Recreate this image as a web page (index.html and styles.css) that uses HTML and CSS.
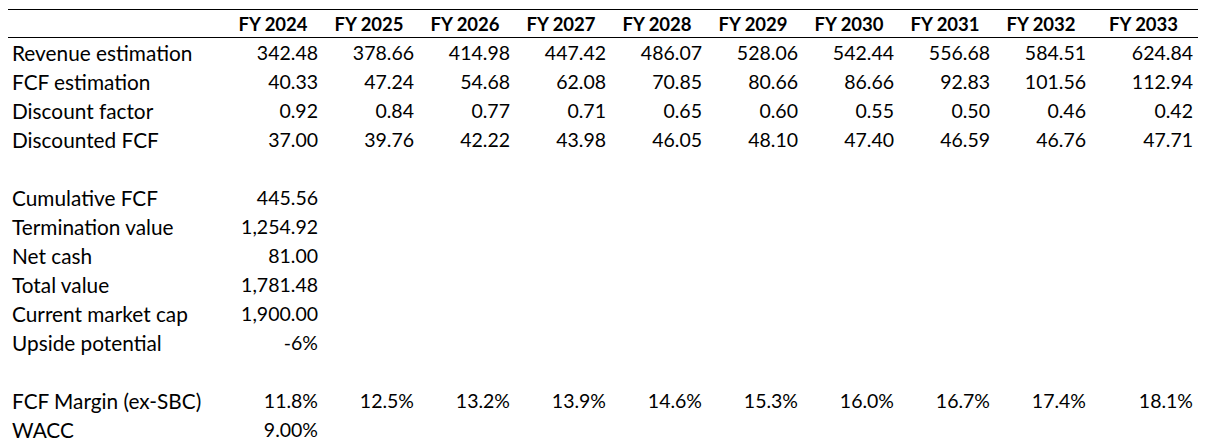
FILE: index.html
```html
<!DOCTYPE html>
<html>
<head>
<meta charset="utf-8">
<link rel="stylesheet" href="styles.css">
</head>
<body>
<table class="dcf">
  <colgroup>
    <col class="c-label">
    <col class="c-yr"><col class="c-yr"><col class="c-yr"><col class="c-yr"><col class="c-yr">
    <col class="c-yr"><col class="c-yr"><col class="c-yr"><col class="c-yr">
    <col class="c-last">
  </colgroup>
  <thead>
    <tr class="head">
      <th></th>
      <th>FY 2024</th><th>FY 2025</th><th>FY 2026</th><th>FY 2027</th><th>FY 2028</th>
      <th>FY 2029</th><th>FY 2030</th><th>FY 2031</th><th>FY 2032</th><th>FY 2033</th>
    </tr>
  </thead>
  <tbody>
    <tr><td class="lbl">Revenue estimation</td><td>342.48</td><td>378.66</td><td>414.98</td><td>447.42</td><td>486.07</td><td>528.06</td><td>542.44</td><td>556.68</td><td>584.51</td><td>624.84</td></tr>
    <tr><td class="lbl">FCF estimation</td><td>40.33</td><td>47.24</td><td>54.68</td><td>62.08</td><td>70.85</td><td>80.66</td><td>86.66</td><td>92.83</td><td>101.56</td><td>112.94</td></tr>
    <tr><td class="lbl">Discount factor</td><td>0.92</td><td>0.84</td><td>0.77</td><td>0.71</td><td>0.65</td><td>0.60</td><td>0.55</td><td>0.50</td><td>0.46</td><td>0.42</td></tr>
    <tr><td class="lbl">Discounted FCF</td><td>37.00</td><td>39.76</td><td>42.22</td><td>43.98</td><td>46.05</td><td>48.10</td><td>47.40</td><td>46.59</td><td>46.76</td><td>47.71</td></tr>
    <tr class="blank"><td colspan="11"></td></tr>
    <tr><td class="lbl">Cumulative FCF</td><td>445.56</td><td colspan="9"></td></tr>
    <tr><td class="lbl">Termination value</td><td>1,254.92</td><td colspan="9"></td></tr>
    <tr><td class="lbl">Net cash</td><td>81.00</td><td colspan="9"></td></tr>
    <tr><td class="lbl">Total value</td><td>1,781.48</td><td colspan="9"></td></tr>
    <tr><td class="lbl">Current market cap</td><td>1,900.00</td><td colspan="9"></td></tr>
    <tr><td class="lbl">Upside potential</td><td>-6%</td><td colspan="9"></td></tr>
    <tr class="blank"><td colspan="11"></td></tr>
    <tr><td class="lbl">FCF Margin (ex-SBC)</td><td>11.8%</td><td>12.5%</td><td>13.2%</td><td>13.9%</td><td>14.6%</td><td>15.3%</td><td>16.0%</td><td>16.7%</td><td>17.4%</td><td>18.1%</td></tr>
    <tr><td class="lbl">WACC</td><td>9.00%</td><td colspan="9"></td></tr>
  </tbody>
</table>
</body>
</html>
```
FILE: styles.css
```css
html, body {
  background: #ffffff;
}
body {
  margin: 9px 8px 0 8px;
  font-family: "Lato", "Liberation Sans", sans-serif;
  font-size: 19.5px;
  color: #000000;
  overflow: hidden;
}
.dcf {
  border-collapse: collapse;
  table-layout: fixed;
  width: 1190px;
}
.c-label { width: 217px; }
.c-yr { width: 96px; }
.c-last { width: 109px; }
.dcf th, .dcf td {
  padding: 1px 3px 0 0;
  white-space: nowrap;
  line-height: 20px;
}
.head th {
  height: 26px;
  border-top: 1px solid #000000;
  border-bottom: 1px solid #000000;
  font-size: 18.5px;
  font-weight: 700;
  text-align: center;
  padding: 1px 0 0 0;
}
.dcf td {
  height: 28px;
  text-align: right;
}
.dcf td:last-child { padding-right: 5px; }
.dcf td.lbl {
  font-size: 20.8px;
  text-align: left;
  padding-left: 4px;
}
```
